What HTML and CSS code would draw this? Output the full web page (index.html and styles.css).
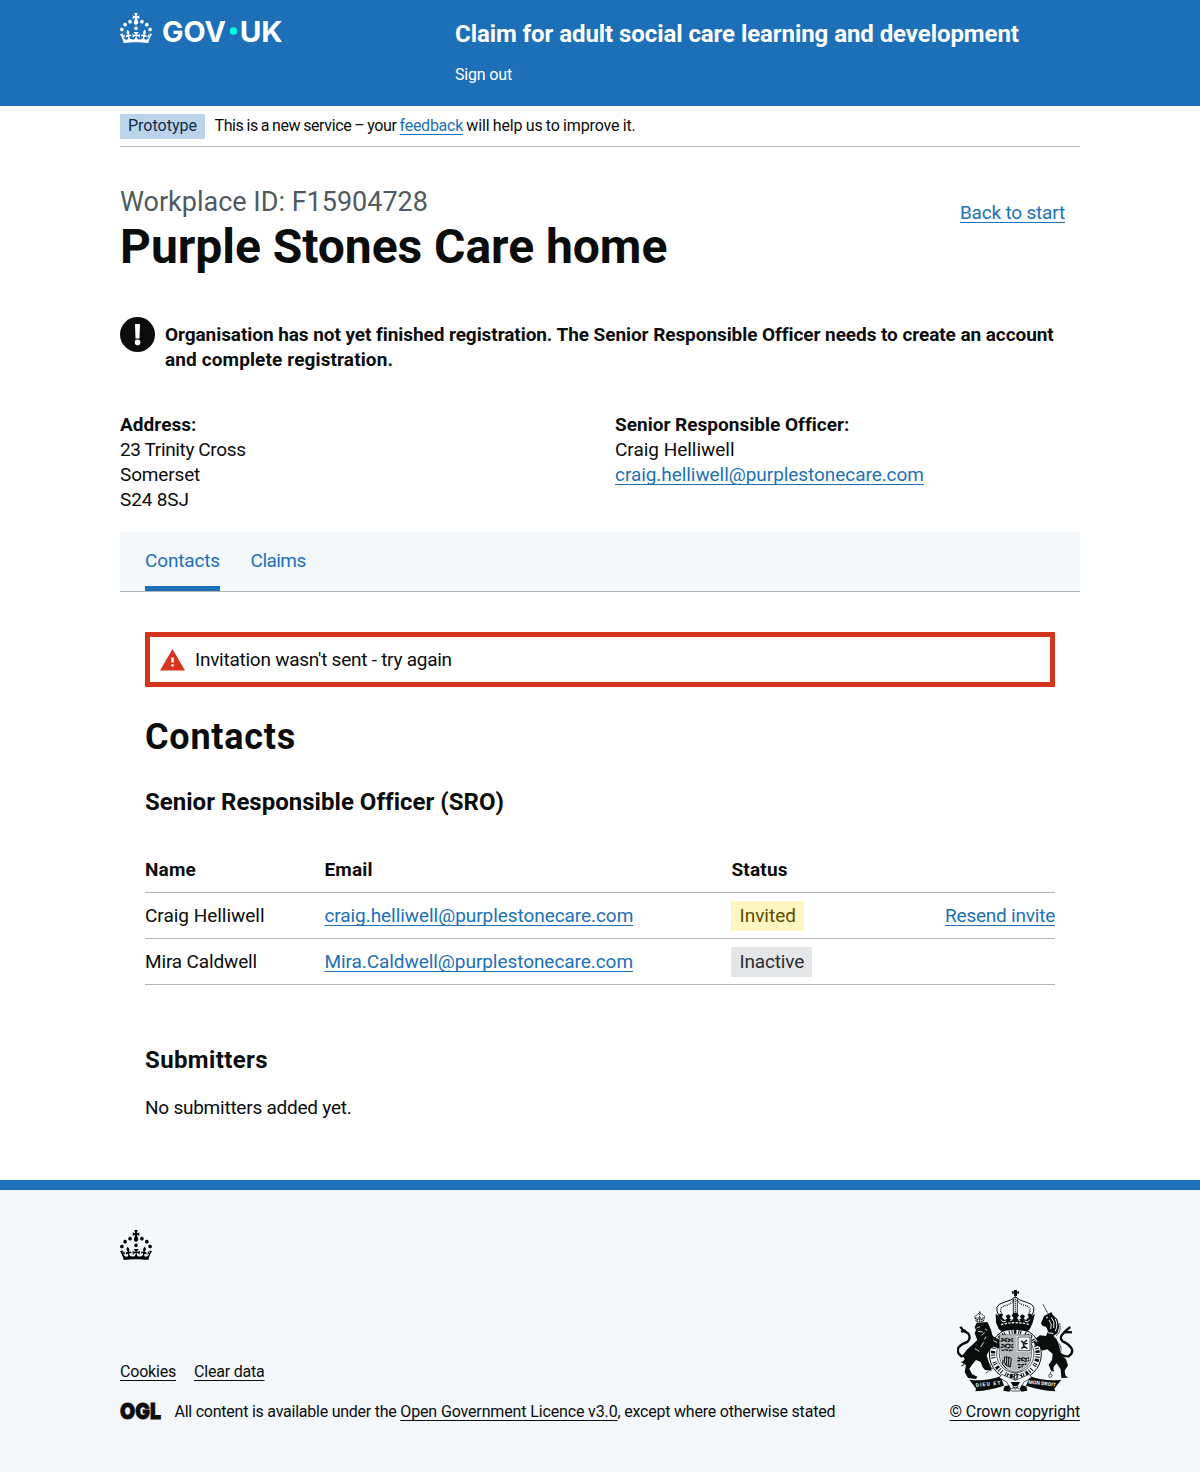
FILE: index.html
```
<!DOCTYPE html>
<html lang="en">
<head>
<meta charset="utf-8">
<title>Purple Stones Care home</title>
<link rel="stylesheet" href="styles.css">
</head>
<body>
<svg width="0" height="0" class="sprite" aria-hidden="true">
  <symbol id="crown" viewBox="0 0 32 30">
    <path d="M22.6 10.4c-1 .4-2-.1-2.4-1-.4-.9.1-2 1-2.4.9-.4 2 .1 2.4 1s-.1 2-1 2.4m-5.9 6.7c-.9.4-2-.1-2.4-1-.4-.9.1-2 1-2.4.9-.4 2 .1 2.4 1s-.1 2-1 2.4m10.8-3.7c-1 .4-2-.1-2.4-1-.4-.9.1-2 1-2.4.9-.4 2 .1 2.4 1s0 2-1 2.4m3.3 4.8c-1 .4-2-.1-2.4-1-.4-.9.1-2 1-2.4.9-.4 2 .1 2.4 1s-.1 2-1 2.4M17 4.7l2.3 1.2V2.5l-2.3.7-.2-.2.9-3h-3.4l.9 3-.2.2c-.1.1-2.3-.7-2.3-.7v3.4L15 4.7c.1.1.1.2.2.2l-1.3 4c-.1.2-.1.4-.1.6 0 1.1.8 2 1.9 2.2h.7c1-.2 1.9-1.1 1.9-2.1 0-.2 0-.4-.1-.6l-1.3-4c-.1-.2 0-.2.1-.3m-7.6 5.7c.9.4 2-.1 2.4-1 .4-.9-.1-2-1-2.4-.9-.4-2 .1-2.4 1s0 2 1 2.4m-5 3c.9.4 2-.1 2.4-1 .4-.9-.1-2-1-2.4-.9-.4-2 .1-2.4 1s.1 2 1 2.4m-3.2 4.8c.9.4 2-.1 2.4-1 .4-.9-.1-2-1-2.4-.9-.4-2 .1-2.4 1s0 2 1 2.4m14.8 11c4.4 0 8.6.3 12.3.8 1.1-4.5 2.4-7 3.7-8.8l-2.5-.9c.2 1.3.3 1.9 0 2.7-.4-.4-.8-1.1-1.1-2.3l-1.2 4c.7-.5 1.3-.8 2-.9-1.1 2.5-2.6 3.1-3.5 3-1.1-.2-1.7-1.2-1.5-2.1.3-1.2 1.5-1.5 2.1-.1 1.1-2.3-.8-3-2-2.3 1.9-1.9 2.1-3.5.6-5.6-2.1 1.6-2.1 3.2-1.2 5.5-1.2-1.4-3.2-.6-2.5 1.6.9-1.4 2.1-.5 1.9.8-.2 1.1-1.7 2.1-3.5 1.9-2.7-.2-2.9-2.1-2.9-3.6.7-.1 1.9.5 2.9 1.9l.4-4.3c-1.1 1.1-2.1 1.4-3.2 1.4.4-1.2 2.1-3 2.1-3h-5.4s1.7 1.9 2.1 3c-1.1 0-2.1-.2-3.2-1.4l.4 4.3c1-1.4 2.2-2 2.9-1.9-.1 1.5-.2 3.4-2.9 3.6-1.9.2-3.4-.8-3.5-1.9-.2-1.3 1-2.2 1.9-.8.7-2.3-1.2-3-2.5-1.6.9-2.2.9-3.9-1.2-5.5-1.5 2-1.3 3.7.6 5.6-1.2-.7-3.1 0-2 2.3.6-1.4 1.8-1.1 2.1.1.2.9-.3 1.9-1.5 2.1-.9.2-2.4-.5-3.5-3 .6 0 1.2.3 2 .9l-1.2-4c-.3 1.1-.7 1.9-1.1 2.3-.3-.8-.2-1.4 0-2.7l-2.9.9C1.3 23 2.6 25.5 3.7 30c3.7-.5 7.9-.8 12.3-.8"/>
  </symbol>
</svg>

<header class="header">
  <div class="container header-row">
    <a class="logo" href="#" aria-label="GOV.UK">
      <svg width="170" height="40" viewBox="0 0 170 40" fill="currentColor">
        <use href="#crown" width="32" height="30"/>
        <text class="logotype" x="42" y="28.6" textLength="64" lengthAdjust="spacingAndGlyphs">GOV</text>
        <circle cx="113.5" cy="18" r="3.8" fill="#00ffe0"/>
        <text class="logotype" x="119.7" y="28.6" textLength="43" lengthAdjust="spacingAndGlyphs">UK</text>
      </svg>
    </a>
    <div class="header-content">
      <a class="service-name" href="#">Claim for adult social care learning and development</a>
      <a class="sign-out" href="#">Sign out</a>
    </div>
  </div>
</header>

<div class="container">
  <div class="phase-banner">
    <strong class="phase-tag">Prototype</strong>
    <span class="phase-text">This is a new service – your <a class="link feedback" href="#">feedback</a><span class="phase-rest"> will help us to improve it.</span></span>
  </div>

  <main class="main">
    <div class="title-row">
      <div>
        <span class="caption">Workplace ID: F15904728</span>
        <h1 class="title">Purple Stones Care home</h1>
      </div>
      <a class="link back-link" href="#">Back to start</a>
    </div>

    <div class="warning">
      <span class="warning-icon"><svg width="35" height="35" viewBox="0 0 35 35"><circle cx="17.5" cy="17.5" r="17.5" fill="#0b0c0c"/><path d="M15 7h5l-.5 14.5h-4z" fill="#fff"/><circle cx="17.6" cy="25.4" r="2.8" fill="#fff"/></svg></span>
      <strong class="warning-text"><span class="warning-first">Organisation has not yet finished registration. The Senior Responsible Officer needs to create an account</span> <span class="warning-second">and complete registration.</span></strong>
    </div>

    <div class="details">
      <div>
        <strong>Address:</strong><br>
        <span class="street">23 Trinity Cross</span><br>
        Somerset<br>
        S24 8SJ
      </div>
      <div>
        <strong class="officer">Senior Responsible Officer:</strong><br>
        <span class="person">Craig Helliwell</span><br>
        <a class="link email" href="#">craig.helliwell@purplestonecare.com</a>
      </div>
    </div>

    <nav class="tabs">
      <a class="tab tab-current" href="#">Contacts</a>
      <a class="tab tab-claims" href="#">Claims</a>
    </nav>

    <section class="panel">
      <div class="alert">
        <svg width="25" height="22" viewBox="0 0 25 22"><path d="M12.5 0 25 21.5H0z" fill="#d4351c"/><path d="M11.3 8.5h2.4v5h-2.4zM11.3 15.2h2.4v2.4h-2.4z" fill="#fff"/></svg>
        <span class="alert-text">Invitation wasn't sent - try again</span>
      </div>

      <h2 class="heading-l">Contacts</h2>
      <h3 class="heading-m">Senior Responsible Officer (SRO)</h3>

      <table class="table">
        <thead>
          <tr><th class="col-name">Name</th><th class="col-email">Email</th><th class="col-status">Status</th><th class="col-action"></th></tr>
        </thead>
        <tbody>
          <tr>
            <td><span class="person">Craig Helliwell</span></td>
            <td><a class="link email" href="#">craig.helliwell@purplestonecare.com</a></td>
            <td><strong class="tag tag-yellow">Invited</strong></td>
            <td class="col-action"><a class="link resend" href="#">Resend invite</a></td>
          </tr>
          <tr>
            <td>Mira Caldwell</td>
            <td><a class="link email" href="#">Mira.Caldwell@purplestonecare.com</a></td>
            <td><strong class="tag tag-grey">Inactive</strong></td>
            <td></td>
          </tr>
        </tbody>
      </table>

      <h3 class="heading-m heading-submitters">Submitters</h3>
      <p class="empty">No submitters added yet.</p>
    </section>
  </main>
</div>

<footer class="footer">
  <div class="container">
    <svg class="footer-crown" width="32" height="30"><use href="#crown"/></svg>
    <div class="footer-meta">
      <div>
        <div class="footer-links">
          <a class="footer-link" href="#">Cookies</a>
          <a class="footer-link" href="#">Clear data</a>
        </div>
        <div class="licence">
          <svg class="ogl-logo" width="52" height="30" viewBox="0 0 52 30" aria-label="OGL"><text class="ogl" x="0" y="22.6" textLength="41" lengthAdjust="spacingAndGlyphs">OGL</text></svg>
          <span>All content is available under the <a class="footer-link licence-link" href="#">Open Government Licence v3.0</a><span class="licence-rest">, except where otherwise stated</span></span>
        </div>
      </div>
      <div class="copyright">
        <svg class="arms" width="117" height="102" viewBox="51 30 351 306" fill="none" stroke="#0b0c0c" stroke-width="3">
          <!-- supporters' tails -->
          <path stroke-width="7" d="M101 211Q80 226 64 229Q48 218 56 202Q66 190 82 186Q94 174 85 161Q74 151 63 155M78 154Q66 150 61 140M351 213Q367 231 386 229Q402 218 394 204Q384 190 368 184Q356 173 370 160Q381 148 391 141M370 158Q382 155 396 157"/>
          <!-- garter -->
          <circle cx="226" cy="222" r="78" fill="#f4f8fb" stroke-width="3"/>
          <circle cx="226" cy="222" r="56" stroke-width="2"/>
          <circle cx="226" cy="222" r="67" stroke-width="13" stroke-dasharray="3 5 3 4 8 6 3 3 3 11"/>
          <!-- lion -->
          <path fill="#0b0c0c" stroke="none" d="M110 128L142 126L148 138L153 150L158 168L180 180L176 190L190 198L182 206L160 200L150 208L140 226L146 246L152 258L155 272L135 270L128 262L122 246L108 240L98 252L88 266L96 282L112 290L108 297L84 294L74 276L78 256L66 248L74 238L68 226L82 208L102 190L112 180L104 160L108 150L104 142Z"/>
          <path stroke="#f4f8fb" stroke-width="2.5" d="M110 144l10-4M114 154l15 2M125 166l9-8M138 170l-5 9M142 151l-7-4M104 206l14 8M131 187l-9 14M160 182l12 6"/>
          <path stroke-width="3" d="M109 124L104 109L112 104L119 98L127 104L134 109L130 124zM105 114h28M119 94v30M109 119h20" stroke-dasharray="5 2"/>
          <path stroke-width="3" d="M74 246l-10 0M72 254l-8 4M150 262l8 4M144 274l-6 6"/>
          <!-- unicorn -->
          <path stroke-width="3" stroke-dasharray="5 2" d="M309 73L324 101"/>
          <path fill="#0b0c0c" stroke="none" d="M303 130L312 108L328 100L334 96L338 104L352 118L358 140L352 160L340 168L350 178L358 198L362 222L378 238L384 256L374 272L376 286L384 293L364 294L362 268L350 250L340 262L342 276L332 270L326 254L336 240L338 222L322 208L306 212L300 200L284 196L282 186L296 184L286 176L300 166L318 168L324 154L318 140L308 138Z"/>
          <path stroke="#f4f8fb" stroke-width="3" d="M318 114l6-3M334 112q12 14 7 32M327 120q11 12 5 27M345 116q10 16 1 38M324 158l16 3"/>
          <path stroke-width="3" stroke-dasharray="5 2" d="M359 130q6 22-10 37M354 187q17 17 2 44q-14 20-25 50"/>
          <circle cx="331" cy="287" r="5" stroke-width="2"/>
          <!-- quartered shield -->
          <path fill="#f4f8fb" stroke-width="2" d="M178 165h96v62q-2 38-48 51-46-13-48-51z"/>
          <path fill="#b5b8ba" stroke="none" d="M180 167h44v50h-44zM229 222h42q0 38-42 52zM181 222h43v52q-42-14-43-52z"/>
          <path stroke="#b5b8ba" stroke-width="8" d="M226 166v110M179 219h94"/>
          <path stroke-width="4" stroke-dasharray="9 2" d="M184 175l9 4 8-4 7 4 12-3M182 184l10-3 12 4 8-4 8 4M184 193l11 3 8-4 9 4 8-3M182 203l12-4 10 5 8-4 8 3M185 211l12-2 10 3 12-2M233 233l9 4 8-4 7 4 10-3M232 243l13-3 9 4 14-3M233 253l12 2 14-3M234 263l14-3"/>
          <path stroke-width="2" d="M234 171h36v41h-36z"/>
          <path stroke-width="4" d="M243 182l8 7 10-9M249 187l3 12-8 7M253 192l10-2M252 198l10 8"/>
          <path stroke-width="3" d="M194 231q-4 14 3 24l14 6 3-26q-10-6-20-4M200 232v25M206 232v26M189 240l-1 13 11 13"/>
          <!-- royal crown -->
          <path fill="#0b0c0c" stroke="none" d="M222 30h9v5l6-2v9l-6-2v8h-9v-8l-6 2v-9l6 2z"/>
          <path fill="#f4f8fb" d="M180 112Q155 76 192 67Q217 61 226 50Q235 61 260 67Q297 76 272 112" stroke-width="3"/>
          <path d="M188 106Q172 82 198 76Q215 72 222 58M264 106Q280 82 254 76Q237 72 230 58" stroke-width="4" stroke-dasharray="3 3"/>
          <path d="M220 55v46M232 55v46" stroke-width="2.5"/>
          <path d="M226 50v52" stroke-width="4" stroke-dasharray="3 3"/>
          <path fill="#0b0c0c" stroke="none" d="M167 101l10 7 1-7 10 1-2 10 8 8 7-4-4-8 8-5 7 5-3 8 7 3 5-5-6-7 5-9h12l5 9-6 7 5 5 7-3-3-8 7-5 8 5-4 8 7 4 8-8-2-10 10-1 1 7 10-7-7 27-8 18-9 9q-38-11-76 0l-9-9-8-18z"/>
          <path stroke="#f4f8fb" stroke-width="4" stroke-dasharray="7 4" d="M183 134q43-12 87 0"/>
          <path stroke="#f4f8fb" stroke-width="3" d="M183 119l6 7 9-3M269 119l-6 7-9-3M211 122l7-3M234 119l7 3"/>
          <!-- motto scroll -->
          <path fill="#0b0c0c" stroke="none" d="M88 299q48 6 94-10l10 28q-42 14-86 17l2-8zM364 299q-48 6-94-10l-12 28q42 14 88 17l-3-8z"/>
          <path fill="#f4f8fb" stroke-width="2" d="M185 283l41 18 42-18 7 9-24 15-12 26h-26l-12-26-23-14z"/>
          <path fill="#0b0c0c" stroke="none" d="M193 319l15-3 5 11-5 8-18-3zM259 319l-15-3-5 11 5 8 18-3zM212 306h28l-7 12h-14z"/>
          <path stroke-width="2.5" d="M218 318l8 10 8-10M214 326l12-5 12 5M204 283l15 7 14-8 15 8"/>
          <circle cx="226" cy="288" r="8" stroke-width="2"/>
          <text class="motto" x="108" y="321" transform="rotate(-6 108 321)" textLength="74">DIEU ET</text>
          <text class="motto" x="265" y="311" transform="rotate(6 265 311)" textLength="82">MON DROIT</text>
        </svg>
        <a class="footer-link crown-copyright" href="#">© Crown copyright</a>
      </div>
    </div>
  </div>
</footer>
</body>
</html>
```
FILE: styles.css
```
* { box-sizing: border-box; }
body {
  margin: 0;
  color: #0b0c0c;
  background: #fff;
  font-family: Roboto, "Liberation Sans", sans-serif;
  font-size: 19px;
  line-height: 25px;
  letter-spacing: -0.15px;
}
.sprite { display: block; }
.container { width: 960px; margin: 0 auto; }
h1, h2, h3, p { margin: 0; }
strong, th { letter-spacing: 0.05px; }

.header { height: 106px; background: #1d70b8; color: #fff; }
.header-row { display: flex; padding-top: 13px; }
.header a { color: #fff; text-decoration: none; }
.logo { width: 335px; height: 40px; }
.logo svg { display: block; }
.logotype { font-family: Inter, Roboto, sans-serif; font-size: 29px; font-weight: 650; letter-spacing: 0; }
.header-content { display: flex; flex-direction: column; align-items: flex-start; padding-top: 6px; }
.service-name { font-size: 24px; font-weight: 700; line-height: 30px; letter-spacing: -0.07px; }
.header .sign-out { margin-top: 16px; font-size: 16px; line-height: 20px; letter-spacing: -0.17px; }

.link { color: #1d70b8; text-decoration: underline; text-decoration-thickness: 1px; text-decoration-skip-ink: none; text-underline-offset: 3px; }

.phase-banner {
  display: flex;
  align-items: center;
  height: 41px;
  border-bottom: 1px solid #b1b4b6;
  font-size: 16px;
  line-height: 20px;
}
.phase-tag {
  margin-right: 9.5px;
  padding: 2px 8px 3px;
  background: #bbd4ea;
  color: #0c2d4a;
  font-weight: 400;
  letter-spacing: 0;
}
.phase-text { padding-bottom: 1px; letter-spacing: -0.38px; word-spacing: -0.65px; }
.feedback { letter-spacing: -0.25px; }
.phase-rest { letter-spacing: -0.11px; }

.main { padding-top: 40px; }
.title-row { display: flex; justify-content: space-between; padding-right: 15px; }
.caption { display: block; margin-bottom: 5px; color: #505a5f; font-size: 27px; line-height: 30px; letter-spacing: 0; }
.title { font-size: 48px; font-weight: 700; line-height: 50px; letter-spacing: -0.04px; }
.back-link { margin-top: 13px; letter-spacing: -0.19px; }

.warning { display: flex; gap: 10px; margin-top: 45px; }
.warning-icon svg { display: block; }
.warning-text { flex: 1; padding-top: 5px; }
.warning-first { letter-spacing: -0.07px; }
.warning-second { display: block; letter-spacing: 0.12px; }

.details { display: grid; grid-template-columns: 495px 1fr; margin: 40px 0 20px; }
.street { letter-spacing: -0.37px; }
.officer { letter-spacing: 0.01px; }
.person { letter-spacing: -0.02px; }
.email { letter-spacing: -0.06px; }

.tabs { display: flex; gap: 30.6px; height: 60px; padding: 0 25px; background: #f4f8fb; border-bottom: 1px solid #b1b4b6; }
.tab { padding-top: 16px; color: #1d70b8; text-decoration: none; }
.tab-current { width: 75px; border-bottom: 5px solid #1d70b8; }
.tab-claims { letter-spacing: -0.55px; }

.panel { padding: 40px 25px 60px; }
.alert { display: flex; align-items: center; gap: 10px; height: 55px; padding: 0 10px; border: 5px solid #d4351c; }
.alert-text { letter-spacing: -0.25px; }
.heading-l { margin-top: 30px; font-size: 36px; line-height: 40px; letter-spacing: 0.76px; }
.heading-m { margin-top: 30px; font-size: 24px; line-height: 30px; letter-spacing: 0.02px; }
.heading-submitters { margin-top: 60px; letter-spacing: 0.38px; }
.empty { margin-top: 20px; letter-spacing: -0.24px; }

.table { width: 100%; margin-top: 30px; border-collapse: separate; border-spacing: 0; table-layout: fixed; }
.table th, .table td { height: 46px; padding: 0; border-bottom: 1px solid #b1b4b6; text-align: left; vertical-align: middle; }
.table th { letter-spacing: 0.18px; }
.table .col-name { width: 179.4px; }
.table .col-email { width: 407.1px; }
.table .col-status { width: 180px; }
.table .col-action { text-align: right; }
.resend { letter-spacing: -0.22px; }
.tag { display: inline-block; padding: 2px 8px 3px; font-weight: 400; letter-spacing: -0.17px; vertical-align: middle; }
.tag-yellow { background: #fff7bf; color: #594d00; letter-spacing: 0; }
.tag-grey { background: #e5e6e7; color: #282d30; }

.footer { height: 292px; padding-top: 40px; border-top: 10px solid #1d70b8; background: #f4f8fb; font-size: 16px; line-height: 20px; letter-spacing: -0.2px; }
.footer-crown { display: block; }
.footer-meta { display: flex; justify-content: space-between; align-items: flex-end; margin-top: 30px; }
.footer-links { display: flex; gap: 18px; margin-bottom: 15px; }
.footer-link { color: #0b0c0c; text-decoration: underline; text-decoration-thickness: 1px; text-decoration-skip-ink: none; text-underline-offset: 3px; }
.licence { display: flex; align-items: center; gap: 2.5px; height: 30px; margin-bottom: -5px; letter-spacing: -0.24px; }
.licence-link { letter-spacing: -0.14px; }
.licence-rest { letter-spacing: -0.21px; }
.ogl-logo { display: block; margin-top: -3px; }
.ogl { font-family: Inter, Roboto, sans-serif; font-size: 22px; font-weight: 900; letter-spacing: 0; fill: #0b0c0c; stroke: #0b0c0c; stroke-width: 0.8px; }
.copyright { display: flex; flex-direction: column; }
.arms { display: block; margin: 0 0 10px 7px; }
.crown-copyright { letter-spacing: -0.12px; }
.motto { font-size: 15px; font-weight: 700; letter-spacing: 0; fill: #f4f8fb; stroke: none; }
```
